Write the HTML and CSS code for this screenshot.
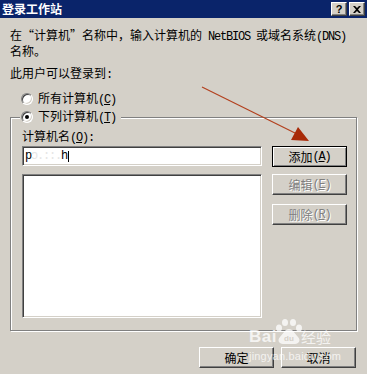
FILE: index.html
```html
<!DOCTYPE html>
<html lang="zh-CN">
<head>
<meta charset="utf-8">
<title>登录工作站</title>
<link rel="stylesheet" href="styles.css">
</head>
<body>
<div class="dialog">
  <div class="titlebar">
    <span class="title">登录工作站</span>
    <div class="caption-btns">
      <span class="cbtn help">?</span>
      <span class="cbtn close"><svg width="8" height="7" viewBox="0 0 8 7"><path d="M0 0h2l2 2 2-2h2L5 3.5 8 7H6L4 5 2 7H0l3-3.5z" fill="#000"/></svg></span>
    </div>
  </div>
  <div class="body">
    <p class="desc">在“计算机”名称中，输入计算机的<span class="lat"> NetBIOS </span>或域名系统<span class="lat">(DNS)</span><br>名称。</p>
    <p class="lbl">此用户可以登录到<span class="lat">:</span></p>
    <div class="radio first"><span class="rb"></span><span>所有计算机<span class="lat">(<u>C</u>)</span></span></div>
    <div class="group">
      <div class="legend"><div class="radio"><span class="rb checked"></span><span>下列计算机<span class="lat">(<u>T</u>)</span></span></div></div>
      <div class="group-body">
        <div class="left-col">
          <div class="lbl2">计算机名<span class="lat">(<u>O</u>):</span></div>
          <div class="edit"><span class="lat">p<span class="redact">ɔ.::.</span>h</span><span class="caret"></span></div>
          <div class="list"></div>
        </div>
        <div class="btn-col">
          <button class="btn default">添加<span class="lat">(<u>A</u>)</span></button>
          <button class="btn disabled b2">编辑<span class="lat">(<u>E</u>)</span></button>
          <button class="btn disabled b3">删除<span class="lat">(<u>R</u>)</span></button>
        </div>
      </div>
    </div>
    <div class="footer">
      <button class="btn">确定</button>
      <button class="btn">取消</button>
    </div>
  </div>
  <svg class="arrow" width="367" height="374" viewBox="0 0 367 374">
    <line x1="202" y1="87" x2="297" y2="134" stroke="#b3401e" stroke-width="1.2"/>
    <polygon points="309,141 291,140 298,127" fill="#a82a08"/>
  </svg>
  <div class="watermark">
    <div class="wm-top">
      <span class="wm-bai">Bai</span>
      <svg class="wm-paw" width="34" height="26" viewBox="0 0 34 26">
        <ellipse cx="6" cy="9" rx="3" ry="3.5" fill="currentColor"/>
        <ellipse cx="12" cy="3.5" rx="3" ry="3.5" fill="currentColor"/>
        <ellipse cx="20" cy="3.5" rx="3" ry="3.5" fill="currentColor"/>
        <ellipse cx="26" cy="9" rx="3" ry="3.5" fill="currentColor"/>
        <path d="M16 10c-4 0-6 5-9 8-3 3-1 7 3 7h12c4 0 6-4 3-7-3-3-5-8-9-8z" fill="currentColor"/>
        <text x="16" y="22" text-anchor="middle" font-size="8" font-family="Liberation Sans, sans-serif" font-weight="bold" fill="#d4d0c8">du</text>
      </svg>
      <span class="wm-jy">经验</span>
    </div>
    <div class="wm-url">jingyan.baidu.com</div>
  </div>
</div>
</body>
</html>
```
FILE: styles.css
```css
* { box-sizing: border-box; }
html, body { margin: 0; padding: 0; }
body {
  width: 367px;
  height: 374px;
  overflow: hidden;
  background: #d4d0c8;
  color: #000;
  font-family: "Noto Sans CJK SC", sans-serif;
  font-size: 12px;
  line-height: 12px;
}
.dialog { position: relative; width: 367px; height: 374px; }

.titlebar {
  height: 18px;
  background: #0a246a;
  display: flex;
  align-items: center;
  justify-content: space-between;
  padding: 0 2px 0 2px;
}
.title { color: #fff; font-weight: bold; font-size: 12px; }
.caption-btns { display: flex; gap: 2px; }
.cbtn {
  width: 16px; height: 14px;
  background: #d4d0c8;
  border: 1px solid;
  border-color: #fff #404040 #404040 #fff;
  box-shadow: inset -1px -1px 0 #808080;
  display: flex; align-items: center; justify-content: center;
}
.help { font-family: "Liberation Sans", sans-serif; font-weight: bold; font-size: 11px; line-height: 12px; }

.body { padding: 0 10px; }
.lat {
  font-family: "Liberation Mono", monospace;
  font-size: 12px;
  letter-spacing: -1.2px;
}
.desc { margin: 10px 0 0; white-space: nowrap; line-height: 13px; }
.lbl { margin: 10px 0 0; }
.radio { display: flex; align-items: center; height: 12px; gap: 5px; white-space: nowrap; }
.radio.first { margin: 12px 0 0 11px; }
.rb {
  width: 12px; height: 12px;
  border-radius: 50%;
  background: #fff;
  border: 1px solid;
  border-color: #808080 #fff #fff #808080;
  box-shadow: inset 1px 1px 0 #404040, inset -1px -1px 0 #d4d0c8;
  display: flex; align-items: center; justify-content: center;
  flex: none;
}
.rb.checked::after { content: ""; width: 4px; height: 4px; border-radius: 50%; background: #000; }

.group {
  margin-top: 12px;
  border: 1px solid #808080;
  box-shadow: inset 1px 1px 0 #fff, 1px 1px 0 #fff;
}
.legend {
  margin: -7px 0 0 9px;
  width: max-content;
  padding: 0 5px 0 1px;
  background: #d4d0c8;
}
.group-body {
  display: flex;
  gap: 10px;
  padding: 7px 9px 12px 11px;
}
.left-col { width: 240px; }
.lbl2 { height: 12px; white-space: nowrap; }
.edit, .list {
  background: #fff;
  border: 1px solid;
  border-color: #808080 #fff #fff #808080;
  box-shadow: inset 1px 1px 0 #404040, inset -1px -1px 0 #d4d0c8;
}
.edit {
  margin-top: 4px;
  height: 20px;
  display: flex;
  align-items: center;
  padding-left: 2px;
  line-height: 12px;
}
.redact { color: #e6e6e6; }
.caret { width: 1px; height: 11px; background: #000; margin-left: 1px; }
.list { margin-top: 8px; height: 144px; }

.btn-col { display: flex; flex-direction: column; padding-top: 16px; }
.btn {
  width: 75px; height: 21px;
  padding: 0;
  margin: 0;
  background: #d4d0c8;
  font-family: "Noto Sans CJK SC", sans-serif;
  font-size: 12px;
  line-height: 12px;
  color: #000;
  border: 1px solid;
  border-color: #fff #404040 #404040 #fff;
  box-shadow: inset -1px -1px 0 #808080;
  display: flex; align-items: center; justify-content: center;
}
.btn.default {
  border-color: #000;
  box-shadow: inset 1px 1px 0 #fff, inset -1px -1px 0 #808080;
}
.btn.disabled { color: #808080; text-shadow: 1px 1px 0 #fff; }
.btn.b2 { margin-top: 7px; }
.btn.b3 { margin-top: 9px; }

.footer {
  margin: 16px 1px 0 0;
  display: flex;
  justify-content: flex-end;
  gap: 7px;
}

.arrow { position: absolute; left: 0; top: 0; pointer-events: none; }

.watermark {
  position: absolute;
  left: 249px;
  top: 318px;
  color: rgba(255, 255, 255, 0.75);
  pointer-events: none;
  font-family: "Liberation Sans", sans-serif;
}
.wm-top { display: flex; align-items: flex-end; height: 27px; }
.wm-bai { font-weight: bold; font-size: 17px; line-height: 17px; letter-spacing: 0.5px; }
.wm-paw { margin-left: -4px; color: rgba(255, 255, 255, 0.75); }
.wm-jy { font-family: "Noto Sans CJK SC", sans-serif; font-size: 15px; line-height: 17px; margin-left: -6px; }
.wm-url { font-size: 11px; line-height: 12px; margin-top: 5px; letter-spacing: 0.2px; }
```
